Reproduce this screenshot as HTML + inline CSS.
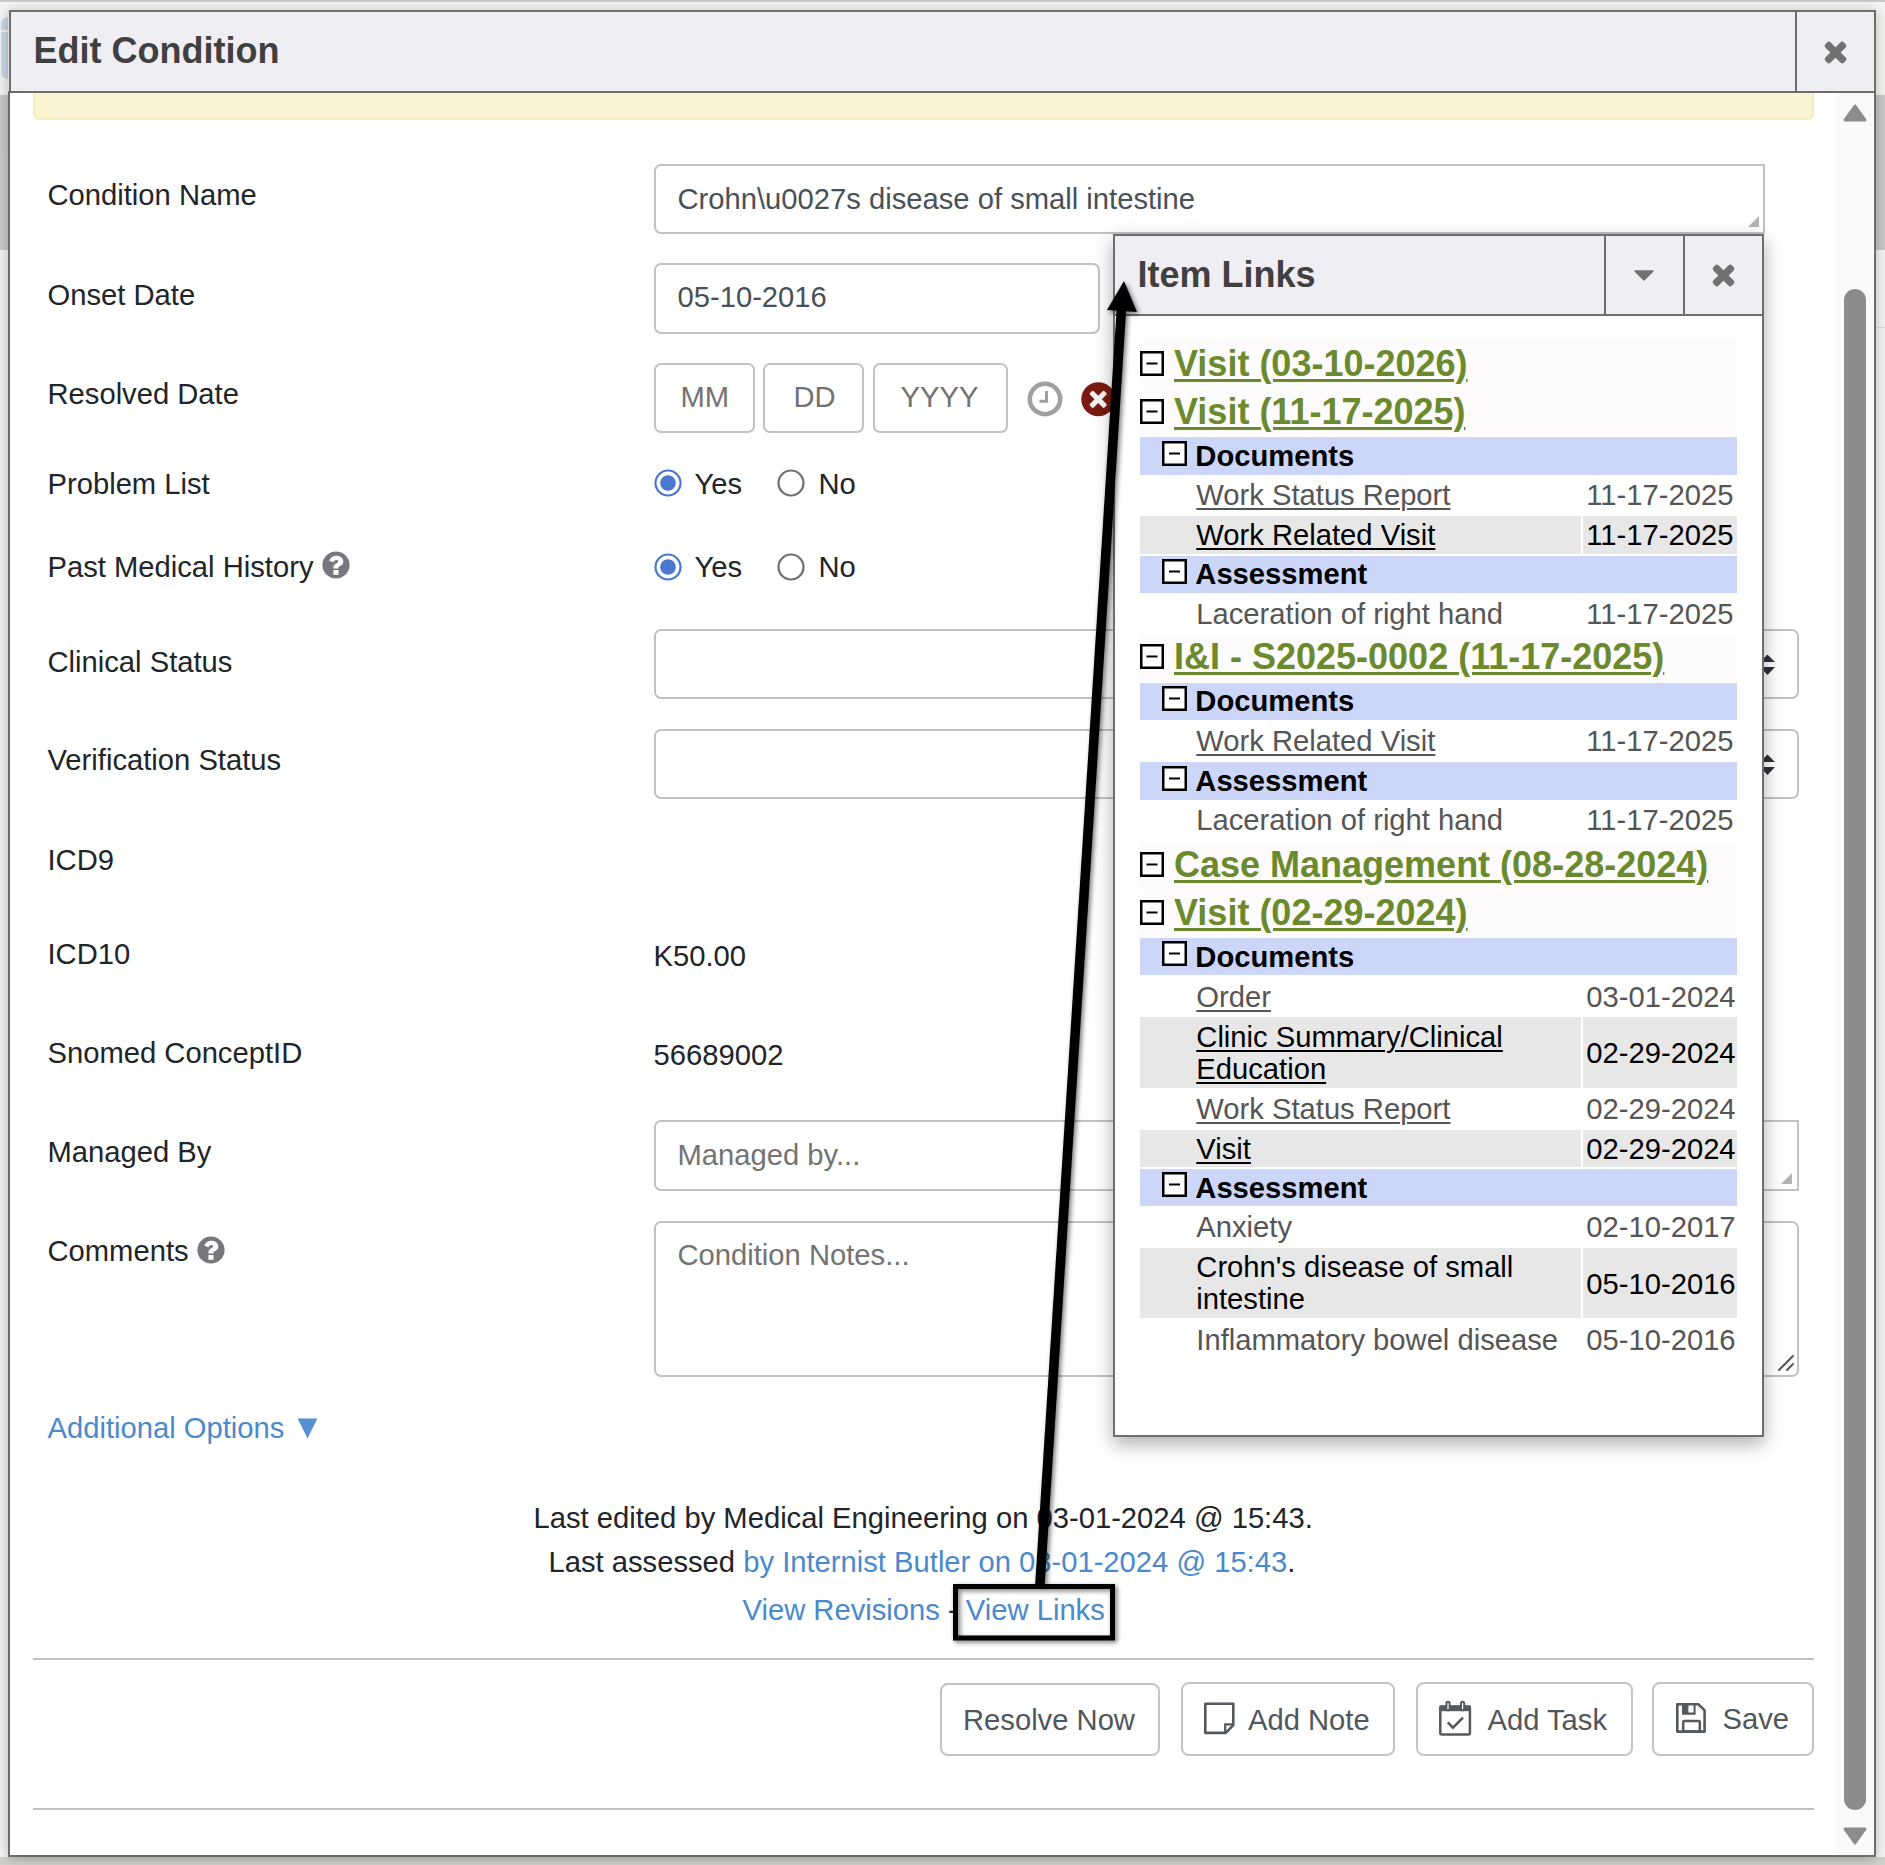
<!DOCTYPE html><html><head><meta charset="utf-8"><style>
*{margin:0;padding:0;box-sizing:border-box}
html,body{width:1885px;height:1865px;overflow:hidden;background:#efefec;font-family:"Liberation Sans",sans-serif}
.t{position:absolute;white-space:nowrap;line-height:1}
.b{position:absolute}
svg{position:absolute;overflow:visible}
</style></head><body><div class="b" style="left:0px;top:0px;width:1885px;height:2px;background:#c9c9c9"></div>
<div class="b" style="left:0px;top:2px;width:1885px;height:1863px;background:#f4f4f2"></div>
<div class="b" style="left:0px;top:95px;width:8px;height:57px;background:#c8c8c8"></div>
<div class="b" style="left:0px;top:152px;width:8px;height:98px;background:#cacaca"></div>
<div class="b" style="left:1876px;top:95px;width:9px;height:155px;background:#c8c8c8"></div>
<div class="b" style="left:1876px;top:327px;width:9px;height:1px;background:#dcdcdc"></div>
<div class="b" style="left:0px;top:1857px;width:1885px;height:8px;background:#d2d1cc"></div>
<div class="b" style="left:1px;top:17px;width:7px;height:62px;background:#c8d9ea;border-radius:7px 0 0 7px"></div>
<div class="b" style="left:1px;top:30px;width:7px;height:2px;background:#f0f0ee"></div>
<div class="b" style="left:8px;top:10px;width:1868px;height:1847px;background:#fff;border:2px solid #6d6d6d;box-shadow:0 2px 12px rgba(0,0,0,.25)"></div>
<div class="b" style="left:10px;top:12px;width:1864px;height:79px;background:#efeef3"></div>
<div class="b" style="left:8px;top:10px;width:1px;height:81px;background:#e0e0e0"></div>
<div class="b" style="left:9px;top:10px;width:2px;height:81px;background:#6d6d6d"></div>
<div class="b" style="left:9px;top:10px;width:1867px;height:2px;background:#6d6d6d"></div>
<div class="b" style="left:10px;top:91px;width:1864px;height:2px;background:#6d6d6d"></div>
<div class="b" style="left:1795px;top:12px;width:2px;height:79px;background:#6d6d6d"></div>
<div class="t" style="left:33.5px;top:33.03px;font-size:36px;font-weight:700;color:#404040;">Edit Condition</div>
<svg style="left:1824px;top:41px" width="23" height="23" viewBox="0 0 23 23"><g transform="rotate(45 11.5 11.5)" fill="#717171"><rect x="-1.5" y="7.9" width="26" height="7.2" rx="2.2"/><rect x="7.9" y="-1.5" width="7.2" height="26" rx="2.2"/></g></svg>
<div class="b" style="left:33px;top:93px;width:1781px;height:27px;background:#fcf3d2;border:2px solid #f7ebbf;border-top:none;border-radius:0 0 7px 7px"></div>
<div class="b" style="left:1836px;top:93px;width:38px;height:1762px;background:#fafafa"></div>
<svg style="left:1843px;top:104px" width="24" height="18" viewBox="0 0 24 18"><path d="M12 2 L22 16 L2 16 Z" fill="#8c8c8c" stroke="#8c8c8c" stroke-width="3" stroke-linejoin="round"/></svg>
<div class="b" style="left:1844px;top:289px;width:22px;height:1521px;background:#8c8c8c;border-radius:11px"></div>
<svg style="left:1843px;top:1827px" width="24" height="18" viewBox="0 0 24 18"><path d="M2 2 L22 2 L12 16 Z" fill="#8c8c8c" stroke="#8c8c8c" stroke-width="3" stroke-linejoin="round"/></svg>
<div class="t" style="left:47.5px;top:181.48px;font-size:29.2px;font-weight:400;color:#212529;">Condition Name</div>
<div class="t" style="left:47.5px;top:281.48px;font-size:29.2px;font-weight:400;color:#212529;">Onset Date</div>
<div class="t" style="left:47.5px;top:380.48px;font-size:29.2px;font-weight:400;color:#212529;">Resolved Date</div>
<div class="t" style="left:47.5px;top:470.48px;font-size:29.2px;font-weight:400;color:#212529;">Problem List</div>
<div class="t" style="left:47.5px;top:553.48px;font-size:29.2px;font-weight:400;color:#212529;">Past Medical History</div>
<div class="t" style="left:47.5px;top:647.88px;font-size:29.2px;font-weight:400;color:#212529;">Clinical Status</div>
<div class="t" style="left:47.5px;top:746.28px;font-size:29.2px;font-weight:400;color:#212529;">Verification Status</div>
<div class="t" style="left:47.5px;top:846.48px;font-size:29.2px;font-weight:400;color:#212529;">ICD9</div>
<div class="t" style="left:47.5px;top:939.68px;font-size:29.2px;font-weight:400;color:#212529;">ICD10</div>
<div class="t" style="left:47.5px;top:1038.98px;font-size:29.2px;font-weight:400;color:#212529;">Snomed ConceptID</div>
<div class="t" style="left:47.5px;top:1137.98px;font-size:29.2px;font-weight:400;color:#212529;">Managed By</div>
<div class="t" style="left:47.5px;top:1237.48px;font-size:29.2px;font-weight:400;color:#212529;">Comments</div>
<div class="t" style="left:47.5px;top:1414.48px;font-size:29.2px;font-weight:400;color:#4a89cc;">Additional Options</div>
<svg style="left:297px;top:1417.5px" width="21" height="21" viewBox="0 0 21 21"><path d="M0.7 0.5 H20.4 L10.5 20.6 Z" fill="#5590d1"/></svg>
<svg style="left:321.6px;top:551.4px" width="28" height="28" viewBox="0 0 28 28"><circle cx="14" cy="14" r="13.6" fill="#76787d"/><path d="M7.2 9.4 C8.6 6.3 11 4.7 14.3 4.7 C18.6 4.7 21.3 7.3 21.3 10.4 C21.3 13.2 19.4 14.3 18 15.1 C17 15.7 16.5 16.1 16.5 16.8 V17.6 H11.4 V16.4 C11.4 14.4 12.5 13.3 14 12.5 C15.2 11.9 16.2 11.4 16.2 10.5 C16.2 9.6 15.4 9.1 14.3 9.1 C13.1 9.1 12.2 9.8 11.3 11.2 Z M11.4 19 H16.5 V23.8 H11.4 Z" fill="#fff"/></svg>
<svg style="left:196.5px;top:1235.5px" width="28" height="28" viewBox="0 0 28 28"><circle cx="14" cy="14" r="13.6" fill="#76787d"/><path d="M7.2 9.4 C8.6 6.3 11 4.7 14.3 4.7 C18.6 4.7 21.3 7.3 21.3 10.4 C21.3 13.2 19.4 14.3 18 15.1 C17 15.7 16.5 16.1 16.5 16.8 V17.6 H11.4 V16.4 C11.4 14.4 12.5 13.3 14 12.5 C15.2 11.9 16.2 11.4 16.2 10.5 C16.2 9.6 15.4 9.1 14.3 9.1 C13.1 9.1 12.2 9.8 11.3 11.2 Z M11.4 19 H16.5 V23.8 H11.4 Z" fill="#fff"/></svg>
<div class="b" style="left:654px;top:164px;width:1111px;height:70px;border:2px solid #c1c2c5;border-radius:7px 0 0 7px;background:#fff"></div>
<div class="t" style="left:677.5px;top:185.48px;font-size:29.2px;font-weight:400;color:#495057;">Crohn\u0027s disease of small intestine</div>
<svg style="left:1748px;top:216px" width="12" height="12" viewBox="0 0 12 12"><path d="M11 0 L11 11 L0 11 Z" fill="#b4b4b4"/></svg>
<div class="b" style="left:654px;top:263px;width:446px;height:71px;border:2px solid #c1c2c5;border-radius:7px;background:#fff"></div>
<div class="t" style="left:677.5px;top:283.48px;font-size:29.2px;font-weight:400;color:#495057;">05-10-2016</div>
<div class="b" style="left:654px;top:363px;width:101px;height:70px;border:2px solid #c1c2c5;border-radius:7px;background:#fff"></div>
<div class="b" style="left:763px;top:363px;width:101px;height:70px;border:2px solid #c1c2c5;border-radius:7px;background:#fff"></div>
<div class="b" style="left:873px;top:363px;width:135px;height:70px;border:2px solid #c1c2c5;border-radius:7px;background:#fff"></div>
<div class="t" style="left:680.5px;top:383.48px;font-size:29.2px;font-weight:400;color:#737373;">MM</div>
<div class="t" style="left:793.5px;top:383.48px;font-size:29.2px;font-weight:400;color:#737373;">DD</div>
<div class="t" style="left:900.5px;top:383.48px;font-size:29.2px;font-weight:400;color:#737373;">YYYY</div>
<svg style="left:1027px;top:381px" width="36" height="36" viewBox="0 0 36 36"><circle cx="18" cy="18" r="15.2" fill="none" stroke="#a0a0a0" stroke-width="4.6"/><path d="M19.5 10 V20.2 H12.5" fill="none" stroke="#a0a0a0" stroke-width="3"/></svg>
<svg style="left:1081px;top:382px" width="35" height="35" viewBox="0 0 35 35"><circle cx="17.3" cy="17.3" r="17" fill="#7a1a10"/><g transform="rotate(45 17.2 17.3)" fill="#f4f4f4"><rect x="6.95" y="14.7" width="20.5" height="5.2" rx="1.3"/><rect x="14.6" y="7.05" width="5.2" height="20.5" rx="1.3"/></g></svg>
<svg style="left:653.5px;top:469.3px" width="28" height="28" viewBox="0 0 28 28"><circle cx="14" cy="14" r="12.5" fill="#fff" stroke="#4a78cf" stroke-width="2.2"/><circle cx="14" cy="14" r="7.8" fill="#4a78cf"/></svg>
<div class="t" style="left:694.5px;top:470.48px;font-size:29.2px;font-weight:400;color:#212529;">Yes</div>
<svg style="left:776.5px;top:469.3px" width="28" height="28" viewBox="0 0 28 28"><circle cx="14" cy="14" r="12.5" fill="#fff" stroke="#6f6f6f" stroke-width="2.2"/></svg>
<div class="t" style="left:818.5px;top:470.48px;font-size:29.2px;font-weight:400;color:#212529;">No</div>
<svg style="left:653.5px;top:553.3px" width="28" height="28" viewBox="0 0 28 28"><circle cx="14" cy="14" r="12.5" fill="#fff" stroke="#4a78cf" stroke-width="2.2"/><circle cx="14" cy="14" r="7.8" fill="#4a78cf"/></svg>
<div class="t" style="left:694.5px;top:553.48px;font-size:29.2px;font-weight:400;color:#212529;">Yes</div>
<svg style="left:776.5px;top:553.3px" width="28" height="28" viewBox="0 0 28 28"><circle cx="14" cy="14" r="12.5" fill="#fff" stroke="#6f6f6f" stroke-width="2.2"/></svg>
<div class="t" style="left:818.5px;top:553.48px;font-size:29.2px;font-weight:400;color:#212529;">No</div>
<div class="b" style="left:654px;top:629px;width:1145px;height:70px;border:2px solid #c1c2c5;border-radius:7px;background:#fff"></div>
<div class="b" style="left:654px;top:729px;width:1145px;height:70px;border:2px solid #c1c2c5;border-radius:7px;background:#fff"></div>
<svg style="left:1760px;top:653.5px" width="16" height="22" viewBox="0 0 16 22"><path d="M7.5 0.5 L15 8 L0 8 Z M0 13 L15 13 L7.5 21 Z" fill="#2f3237"/></svg>
<svg style="left:1760px;top:753.5px" width="16" height="22" viewBox="0 0 16 22"><path d="M7.5 0.5 L15 8 L0 8 Z M0 13 L15 13 L7.5 21 Z" fill="#2f3237"/></svg>
<div class="t" style="left:653.5px;top:942.48px;font-size:29.2px;font-weight:400;color:#212529;">K50.00</div>
<div class="t" style="left:653.5px;top:1041.48px;font-size:29.2px;font-weight:400;color:#212529;">56689002</div>
<div class="b" style="left:654px;top:1120px;width:1145px;height:71px;border:2px solid #c1c2c5;border-radius:7px 0 0 7px;background:#fff"></div>
<div class="t" style="left:677.5px;top:1141.48px;font-size:29.2px;font-weight:400;color:#737373;">Managed by...</div>
<svg style="left:1781px;top:1173px" width="12" height="12" viewBox="0 0 12 12"><path d="M11 0 L11 11 L0 11 Z" fill="#b4b4b4"/></svg>
<div class="b" style="left:654px;top:1221px;width:1145px;height:156px;border:2px solid #c1c2c5;border-radius:7px;background:#fff"></div>
<div class="t" style="left:677.5px;top:1241.48px;font-size:29.2px;font-weight:400;color:#737373;">Condition Notes...</div>
<svg style="left:1777px;top:1354px" width="18" height="18" viewBox="0 0 18 18"><path d="M2 16 L16 2 M10 16 L16 10" stroke="#555" stroke-width="2" stroke-linecap="round"/></svg>
<div class="t" style="left:533.5px;top:1504.48px;font-size:29.2px;font-weight:400;color:#212529;">Last edited by Medical Engineering on 03-01-2024 @ 15:43.</div>
<div class="t" style="left:548.5px;top:1548.48px;font-size:29.2px;font-weight:400;color:#212529;">Last assessed <span style="color:#4a89cc">by Internist Butler on 03-01-2024 @ 15:43</span>.</div>
<div class="t" style="left:742.5px;top:1596.48px;font-size:29.2px;font-weight:400;color:#212529;"><span style="color:#4a89cc">View Revisions</span> - <span style="color:#4a89cc">View Links</span></div>
<div class="b" style="left:33px;top:1658px;width:1781px;height:2px;background:#c2c3c6"></div>
<div class="b" style="left:33px;top:1808px;width:1781px;height:2px;background:#c2c3c6"></div>
<div class="b" style="left:940px;top:1683px;width:220px;height:73px;border:2px solid #c4c4c4;border-radius:8px;background:#fff"></div>
<div class="t" style="left:963.0px;top:1705.98px;font-size:29.2px;font-weight:400;color:#50565c;">Resolve Now</div>
<div class="b" style="left:1181px;top:1682px;width:214px;height:74px;border:2px solid #c4c4c4;border-radius:8px;background:#fff"></div>
<svg style="left:1203px;top:1702px" width="32" height="32" viewBox="0 0 32 32"><path d="M2.3 1.8 H30.3 V23.2 L22.8 30.9 H2.3 Z" fill="none" stroke="#54595e" stroke-width="2.6" stroke-linejoin="round"/><path d="M22.2 30.6 V22.3 H30.3" fill="none" stroke="#54595e" stroke-width="2.2"/></svg>
<div class="t" style="left:1248.0px;top:1705.98px;font-size:29.2px;font-weight:400;color:#50565c;">Add Note</div>
<div class="b" style="left:1416px;top:1682px;width:217px;height:74px;border:2px solid #c4c4c4;border-radius:8px;background:#fff"></div>
<svg style="left:1438px;top:1699px" width="34" height="37" viewBox="0 0 34 37"><rect x="2.3" y="7.4" width="29.6" height="28.2" rx="1.5" fill="none" stroke="#54595e" stroke-width="2.5"/><rect x="1.5" y="6.6" width="31.2" height="5.6" fill="#54595e"/><rect x="8.4" y="2.8" width="3.2" height="8.5" rx="1.6" fill="#fff" stroke="#54595e" stroke-width="2"/><rect x="23" y="2.8" width="3.2" height="8.5" rx="1.6" fill="#fff" stroke="#54595e" stroke-width="2"/><path d="M9.7 23.3 L15 28.6 L25 18.7" fill="none" stroke="#54595e" stroke-width="2.6"/></svg>
<div class="t" style="left:1487.5px;top:1705.98px;font-size:29.2px;font-weight:400;color:#50565c;">Add Task</div>
<div class="b" style="left:1652px;top:1682px;width:162px;height:74px;border:2px solid #c4c4c4;border-radius:8px;background:#fff"></div>
<svg style="left:1675px;top:1702px" width="32" height="32" viewBox="0 0 32 32"><path d="M2.3 2.3 H23.5 L29.6 8.4 V29.6 H2.3 Z" fill="none" stroke="#54595e" stroke-width="2.6" stroke-linejoin="round"/><path fill-rule="evenodd" d="M7 2 H20.6 V12.8 H7 Z M13.4 2 H18.6 V10.6 H13.4 Z" fill="#54595e"/><rect x="8.2" y="19" width="16.6" height="10.6" rx="1.2" fill="none" stroke="#54595e" stroke-width="2.5"/></svg>
<div class="t" style="left:1722.5px;top:1705.48px;font-size:29.2px;font-weight:400;color:#50565c;">Save</div>
<div class="b" style="left:1113px;top:234px;width:651px;height:1203px;background:#fff;border:2px solid #6e6e6e;box-shadow:0 7px 18px rgba(0,0,0,.32)"></div>
<div class="b" style="left:1115px;top:236px;width:647px;height:78px;background:#efeef3"></div>
<div class="b" style="left:1115px;top:314px;width:647px;height:2px;background:#6e6e6e"></div>
<div class="b" style="left:1604px;top:236px;width:2px;height:78px;background:#6d6d6d"></div>
<div class="b" style="left:1683px;top:236px;width:2px;height:78px;background:#6d6d6d"></div>
<div class="t" style="left:1137.5px;top:256.73px;font-size:36px;font-weight:700;color:#404040;">Item Links</div>
<svg style="left:1634px;top:269.5px" width="20" height="11" viewBox="0 0 20 11"><path d="M1 1 L19 1 L10 10 Z" fill="#717171" stroke="#717171" stroke-width="1.5" stroke-linejoin="round"/></svg>
<svg style="left:1712px;top:264px" width="23" height="23" viewBox="0 0 23 23"><g transform="rotate(45 11.5 11.5)" fill="#717171"><rect x="-1.5" y="7.9" width="26" height="7.2" rx="2.2"/><rect x="7.9" y="-1.5" width="7.2" height="26" rx="2.2"/></g></svg>
<div class="b" style="left:1140px;top:340px;width:597px;height:48px;background:#fdfbfb"></div>
<svg style="left:1140px;top:351px" width="24" height="25" viewBox="0 0 24 25"><rect x="1.25" y="1.25" width="21.5" height="22.5" fill="#fff" stroke="#000" stroke-width="2.5"/><path d="M6.5 12.5 H17.5" stroke="#000" stroke-width="2"/></svg>
<div class="t" style="left:1174.0px;top:345.73px;font-size:36px;font-weight:700;color:#6b8a2e;text-decoration:underline;text-decoration-thickness:2.7px;text-underline-offset:3px">Visit (03-10-2026)</div>
<div class="b" style="left:1140px;top:389px;width:597px;height:47px;background:#fdfbfb"></div>
<svg style="left:1140px;top:399.4px" width="24" height="25" viewBox="0 0 24 25"><rect x="1.25" y="1.25" width="21.5" height="22.5" fill="#fff" stroke="#000" stroke-width="2.5"/><path d="M6.5 12.5 H17.5" stroke="#000" stroke-width="2"/></svg>
<div class="t" style="left:1174.0px;top:394.13px;font-size:36px;font-weight:700;color:#6b8a2e;text-decoration:underline;text-decoration-thickness:2.7px;text-underline-offset:3px">Visit (11-17-2025)</div>
<div class="b" style="left:1140px;top:437px;width:597px;height:38px;background:#ccd6f8"></div>
<svg style="left:1162px;top:441px" width="25" height="25" viewBox="0 0 25 25"><rect x="1.25" y="1.25" width="22.5" height="22.5" fill="#fff" stroke="#000" stroke-width="2.5"/><path d="M7.0 12.5 H18.0" stroke="#000" stroke-width="2"/></svg>
<div class="t" style="left:1195.3px;top:442.48px;font-size:29.2px;font-weight:700;color:#000;">Documents</div>
<div class="t" style="left:1196.3px;top:481.38px;font-size:29.2px;font-weight:400;color:#555;text-decoration:underline;text-decoration-thickness:2px;text-underline-offset:3px">Work Status Report</div>
<div class="t" style="left:1586.3px;top:481.38px;font-size:29.2px;font-weight:400;color:#555;">11-17-2025</div>
<div class="b" style="left:1140px;top:516px;width:441px;height:38px;background:#e7e7e7"></div>
<div class="b" style="left:1583px;top:516px;width:154px;height:38px;background:#e7e7e7"></div>
<div class="t" style="left:1196.3px;top:521.38px;font-size:29.2px;font-weight:400;color:#000;text-decoration:underline;text-decoration-thickness:2px;text-underline-offset:3px">Work Related Visit</div>
<div class="t" style="left:1586.3px;top:521.38px;font-size:29.2px;font-weight:400;color:#000;">11-17-2025</div>
<div class="b" style="left:1140px;top:556px;width:597px;height:37px;background:#ccd6f8"></div>
<svg style="left:1162px;top:559px" width="25" height="25" viewBox="0 0 25 25"><rect x="1.25" y="1.25" width="22.5" height="22.5" fill="#fff" stroke="#000" stroke-width="2.5"/><path d="M7.0 12.5 H18.0" stroke="#000" stroke-width="2"/></svg>
<div class="t" style="left:1195.3px;top:560.48px;font-size:29.2px;font-weight:700;color:#000;">Assessment</div>
<div class="t" style="left:1196.3px;top:600.38px;font-size:29.2px;font-weight:400;color:#555;">Laceration of right hand</div>
<div class="t" style="left:1586.3px;top:600.38px;font-size:29.2px;font-weight:400;color:#555;">11-17-2025</div>
<div class="b" style="left:1140px;top:635px;width:597px;height:47px;background:#fdfbfb"></div>
<svg style="left:1140px;top:644px" width="24" height="25" viewBox="0 0 24 25"><rect x="1.25" y="1.25" width="21.5" height="22.5" fill="#fff" stroke="#000" stroke-width="2.5"/><path d="M6.5 12.5 H17.5" stroke="#000" stroke-width="2"/></svg>
<div class="t" style="left:1174.0px;top:638.73px;font-size:36px;font-weight:700;color:#6b8a2e;text-decoration:underline;text-decoration-thickness:2.7px;text-underline-offset:3px">I&amp;I - S2025-0002 (11-17-2025)</div>
<div class="b" style="left:1140px;top:683px;width:597px;height:37px;background:#ccd6f8"></div>
<svg style="left:1162px;top:686px" width="25" height="25" viewBox="0 0 25 25"><rect x="1.25" y="1.25" width="22.5" height="22.5" fill="#fff" stroke="#000" stroke-width="2.5"/><path d="M7.0 12.5 H18.0" stroke="#000" stroke-width="2"/></svg>
<div class="t" style="left:1195.3px;top:687.48px;font-size:29.2px;font-weight:700;color:#000;">Documents</div>
<div class="t" style="left:1196.3px;top:727.38px;font-size:29.2px;font-weight:400;color:#555;text-decoration:underline;text-decoration-thickness:2px;text-underline-offset:3px">Work Related Visit</div>
<div class="t" style="left:1586.3px;top:727.38px;font-size:29.2px;font-weight:400;color:#555;">11-17-2025</div>
<div class="b" style="left:1140px;top:762px;width:597px;height:38px;background:#ccd6f8"></div>
<svg style="left:1162px;top:766px" width="25" height="25" viewBox="0 0 25 25"><rect x="1.25" y="1.25" width="22.5" height="22.5" fill="#fff" stroke="#000" stroke-width="2.5"/><path d="M7.0 12.5 H18.0" stroke="#000" stroke-width="2"/></svg>
<div class="t" style="left:1195.3px;top:767.48px;font-size:29.2px;font-weight:700;color:#000;">Assessment</div>
<div class="t" style="left:1196.3px;top:806.38px;font-size:29.2px;font-weight:400;color:#555;">Laceration of right hand</div>
<div class="t" style="left:1586.3px;top:806.38px;font-size:29.2px;font-weight:400;color:#555;">11-17-2025</div>
<div class="b" style="left:1140px;top:842px;width:597px;height:47px;background:#fdfbfb"></div>
<svg style="left:1140px;top:852px" width="24" height="25" viewBox="0 0 24 25"><rect x="1.25" y="1.25" width="21.5" height="22.5" fill="#fff" stroke="#000" stroke-width="2.5"/><path d="M6.5 12.5 H17.5" stroke="#000" stroke-width="2"/></svg>
<div class="t" style="left:1174.0px;top:846.73px;font-size:36px;font-weight:700;color:#6b8a2e;text-decoration:underline;text-decoration-thickness:2.7px;text-underline-offset:3px">Case Management (08-28-2024)</div>
<div class="b" style="left:1140px;top:890px;width:597px;height:47px;background:#fdfbfb"></div>
<svg style="left:1140px;top:900.3px" width="24" height="25" viewBox="0 0 24 25"><rect x="1.25" y="1.25" width="21.5" height="22.5" fill="#fff" stroke="#000" stroke-width="2.5"/><path d="M6.5 12.5 H17.5" stroke="#000" stroke-width="2"/></svg>
<div class="t" style="left:1174.0px;top:895.03px;font-size:36px;font-weight:700;color:#6b8a2e;text-decoration:underline;text-decoration-thickness:2.7px;text-underline-offset:3px">Visit (02-29-2024)</div>
<div class="b" style="left:1140px;top:938px;width:597px;height:37px;background:#ccd6f8"></div>
<svg style="left:1162px;top:941.3px" width="25" height="25" viewBox="0 0 25 25"><rect x="1.25" y="1.25" width="22.5" height="22.5" fill="#fff" stroke="#000" stroke-width="2.5"/><path d="M7.0 12.5 H18.0" stroke="#000" stroke-width="2"/></svg>
<div class="t" style="left:1195.3px;top:942.78px;font-size:29.2px;font-weight:700;color:#000;">Documents</div>
<div class="t" style="left:1196.3px;top:983.38px;font-size:29.2px;font-weight:400;color:#555;text-decoration:underline;text-decoration-thickness:2px;text-underline-offset:3px">Order</div>
<div class="t" style="left:1586.3px;top:983.38px;font-size:29.2px;font-weight:400;color:#555;">03-01-2024</div>
<div class="b" style="left:1140px;top:1017px;width:441px;height:71px;background:#e7e7e7"></div>
<div class="b" style="left:1583px;top:1017px;width:154px;height:71px;background:#e7e7e7"></div>
<div class="t" style="left:1196.3px;top:1023.38px;font-size:29.2px;font-weight:400;color:#000;text-decoration:underline;text-decoration-thickness:2px;text-underline-offset:3px">Clinic Summary/Clinical</div>
<div class="t" style="left:1196.3px;top:1054.98px;font-size:29.2px;font-weight:400;color:#000;text-decoration:underline;text-decoration-thickness:2px;text-underline-offset:3px">Education</div>
<div class="t" style="left:1586.3px;top:1038.98px;font-size:29.2px;font-weight:400;color:#000;">02-29-2024</div>
<div class="t" style="left:1196.3px;top:1094.68px;font-size:29.2px;font-weight:400;color:#555;text-decoration:underline;text-decoration-thickness:2px;text-underline-offset:3px">Work Status Report</div>
<div class="t" style="left:1586.3px;top:1094.68px;font-size:29.2px;font-weight:400;color:#555;">02-29-2024</div>
<div class="b" style="left:1140px;top:1130px;width:441px;height:37px;background:#e7e7e7"></div>
<div class="b" style="left:1583px;top:1130px;width:154px;height:37px;background:#e7e7e7"></div>
<div class="t" style="left:1196.3px;top:1134.78px;font-size:29.2px;font-weight:400;color:#000;text-decoration:underline;text-decoration-thickness:2px;text-underline-offset:3px">Visit</div>
<div class="t" style="left:1586.3px;top:1134.78px;font-size:29.2px;font-weight:400;color:#000;">02-29-2024</div>
<div class="b" style="left:1140px;top:1169px;width:597px;height:37px;background:#ccd6f8"></div>
<svg style="left:1162px;top:1172.4px" width="25" height="25" viewBox="0 0 25 25"><rect x="1.25" y="1.25" width="22.5" height="22.5" fill="#fff" stroke="#000" stroke-width="2.5"/><path d="M7.0 12.5 H18.0" stroke="#000" stroke-width="2"/></svg>
<div class="t" style="left:1195.3px;top:1173.88px;font-size:29.2px;font-weight:700;color:#000;">Assessment</div>
<div class="t" style="left:1196.3px;top:1213.38px;font-size:29.2px;font-weight:400;color:#555;">Anxiety</div>
<div class="t" style="left:1586.3px;top:1213.38px;font-size:29.2px;font-weight:400;color:#555;">02-10-2017</div>
<div class="b" style="left:1140px;top:1248px;width:441px;height:70px;background:#e7e7e7"></div>
<div class="b" style="left:1583px;top:1248px;width:154px;height:70px;background:#e7e7e7"></div>
<div class="t" style="left:1196.3px;top:1252.88px;font-size:29.2px;font-weight:400;color:#000;">Crohn's disease of small</div>
<div class="t" style="left:1196.3px;top:1285.18px;font-size:29.2px;font-weight:400;color:#000;">intestine</div>
<div class="t" style="left:1586.3px;top:1269.58px;font-size:29.2px;font-weight:400;color:#000;">05-10-2016</div>
<div class="t" style="left:1196.3px;top:1325.98px;font-size:29.2px;font-weight:400;color:#555;">Inflammatory bowel disease</div>
<div class="t" style="left:1586.3px;top:1325.98px;font-size:29.2px;font-weight:400;color:#555;">05-10-2016</div>
<svg style="left:0;top:0" width="1885" height="1865" viewBox="0 0 1885 1865"><defs><filter id="sh" x="-20%" y="-5%" width="140%" height="110%"><feGaussianBlur in="SourceAlpha" stdDeviation="2.5"/><feOffset dx="2" dy="2"/><feComponentTransfer><feFuncA type="linear" slope="0.55"/></feComponentTransfer><feMerge><feMergeNode/><feMergeNode in="SourceGraphic"/></feMerge></filter></defs><g filter="url(#sh)"><path d="M1039.7 1588 L1121.7 305" stroke="#000" stroke-width="9.5"/><path d="M1124 281 L1107 310 L1137 312 Z" fill="#000"/><rect x="955.5" y="1586.5" width="157" height="51.5" fill="none" stroke="#000" stroke-width="5"/></g></svg></body></html>
